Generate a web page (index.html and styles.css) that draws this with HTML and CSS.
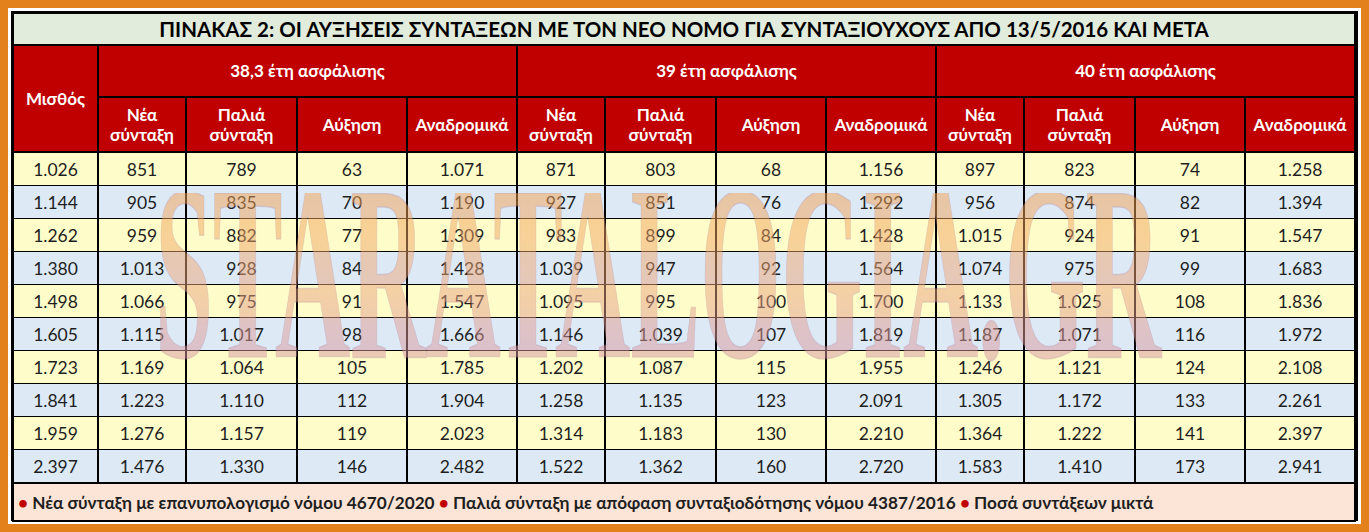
FILE: index.html
```html
<!DOCTYPE html>
<html lang="el">
<head>
<meta charset="utf-8">
<title>Πίνακας 2</title>
<link rel="stylesheet" href="styles.css">
</head>
<body>
<div class="frame">
  <div class="inner">
    <table class="grid">
      <colgroup>
        <col class="c-salary">
        <col class="c-new"><col class="c-old"><col class="c-inc"><col class="c-ret">
        <col class="c-new"><col class="c-old"><col class="c-inc"><col class="c-ret">
        <col class="c-new"><col class="c-old"><col class="c-inc"><col class="c-ret">
      </colgroup>
      <thead>
        <tr class="title-row"><th colspan="13">ΠΙΝΑΚΑΣ 2: ΟΙ ΑΥΞΗΣΕΙΣ ΣΥΝΤΑΞΕΩΝ ΜΕ ΤΟΝ ΝΕΟ ΝΟΜΟ ΓΙΑ ΣΥΝΤΑΞΙΟΥΧΟΥΣ ΑΠΟ 13/5/2016 ΚΑΙ ΜΕΤΑ</th></tr>
        <tr class="head1">
          <th rowspan="2" class="salary-head">Μισθός</th>
          <th colspan="4" class="grp">38,3 έτη ασφάλισης</th>
          <th colspan="4" class="grp">39 έτη ασφάλισης</th>
          <th colspan="4" class="grp">40 έτη ασφάλισης</th>
        </tr>
        <tr class="head2">
          <th>Νέα<br>σύνταξη</th><th>Παλιά<br>σύνταξη</th><th>Αύξηση</th><th>Αναδρομικά</th>
          <th>Νέα<br>σύνταξη</th><th>Παλιά<br>σύνταξη</th><th>Αύξηση</th><th>Αναδρομικά</th>
          <th>Νέα<br>σύνταξη</th><th>Παλιά<br>σύνταξη</th><th>Αύξηση</th><th>Αναδρομικά</th>
        </tr>
      </thead>
      <tbody>
        <tr class="y"><td>1.026</td><td>851</td><td>789</td><td>63</td><td>1.071</td><td>871</td><td>803</td><td>68</td><td>1.156</td><td>897</td><td>823</td><td>74</td><td>1.258</td></tr>
        <tr class="b"><td>1.144</td><td>905</td><td>835</td><td>70</td><td>1.190</td><td>927</td><td>851</td><td>76</td><td>1.292</td><td>956</td><td>874</td><td>82</td><td>1.394</td></tr>
        <tr class="y"><td>1.262</td><td>959</td><td>882</td><td>77</td><td>1.309</td><td>983</td><td>899</td><td>84</td><td>1.428</td><td>1.015</td><td>924</td><td>91</td><td>1.547</td></tr>
        <tr class="b"><td>1.380</td><td>1.013</td><td>928</td><td>84</td><td>1.428</td><td>1.039</td><td>947</td><td>92</td><td>1.564</td><td>1.074</td><td>975</td><td>99</td><td>1.683</td></tr>
        <tr class="y"><td>1.498</td><td>1.066</td><td>975</td><td>91</td><td>1.547</td><td>1.095</td><td>995</td><td>100</td><td>1.700</td><td>1.133</td><td>1.025</td><td>108</td><td>1.836</td></tr>
        <tr class="b"><td>1.605</td><td>1.115</td><td>1.017</td><td>98</td><td>1.666</td><td>1.146</td><td>1.039</td><td>107</td><td>1.819</td><td>1.187</td><td>1.071</td><td>116</td><td>1.972</td></tr>
        <tr class="y"><td>1.723</td><td>1.169</td><td>1.064</td><td>105</td><td>1.785</td><td>1.202</td><td>1.087</td><td>115</td><td>1.955</td><td>1.246</td><td>1.121</td><td>124</td><td>2.108</td></tr>
        <tr class="b"><td>1.841</td><td>1.223</td><td>1.110</td><td>112</td><td>1.904</td><td>1.258</td><td>1.135</td><td>123</td><td>2.091</td><td>1.305</td><td>1.172</td><td>133</td><td>2.261</td></tr>
        <tr class="y"><td>1.959</td><td>1.276</td><td>1.157</td><td>119</td><td>2.023</td><td>1.314</td><td>1.183</td><td>130</td><td>2.210</td><td>1.364</td><td>1.222</td><td>141</td><td>2.397</td></tr>
        <tr class="b"><td>2.397</td><td>1.476</td><td>1.330</td><td>146</td><td>2.482</td><td>1.522</td><td>1.362</td><td>160</td><td>2.720</td><td>1.583</td><td>1.410</td><td>173</td><td>2.941</td></tr>
      </tbody>
      <tfoot>
        <tr class="foot"><td colspan="13"><span class="dot">•</span> Νέα σύνταξη με επανυπολογισμό νόμου 4670/2020 <span class="dot">•</span> Παλιά σύνταξη με απόφαση συνταξιοδότησης νόμου 4387/2016 <span class="dot">•</span> Ποσά συντάξεων μικτά</td></tr>
      </tfoot>
    </table>
    <svg class="watermark" width="1020" height="170" viewBox="0 0 1020 170" aria-hidden="true">
      <defs>
        <linearGradient id="wm" x1="0" y1="0" x2="0" y2="1">
          <stop offset="0" stop-color="#f7a035"/>
          <stop offset="0.5" stop-color="#f0a878"/>
          <stop offset="1" stop-color="#c98cc0"/>
        </linearGradient>
      </defs>
      <text x="4" y="164" textLength="1006" lengthAdjust="spacingAndGlyphs" class="wm-text">STARATALOGIA.GR</text>
    </svg>
  </div>
</div>
</body>
</html>
```
FILE: styles.css
```css
html, body {
  margin: 0;
  padding: 0;
}
body {
  background: #e3821c;
  width: 1369px;
  height: 532px;
  overflow: hidden;
  font-family: Lato, "Open Sans", "Noto Sans", sans-serif;
}
.frame {
  margin: 8px;
  background: #ffffff;
  padding: 3px;
  height: 510px;
}
.inner {
  position: relative;
  border: 2px solid #000;
  height: 506px;
  background: #fff;
}
.grid {
  border-collapse: collapse;
  table-layout: fixed;
  width: 1342px;
  margin: -1px 0 0 -1px;
}
.c-salary { width: 85px; }
.c-new { width: 88px; }
.c-old { width: 111px; }
.c-inc { width: 110px; }
.c-ret { width: 110px; }

th, td {
  text-align: center;
  padding: 0;
  border: 2px solid #000;
}
.title-row th {
  height: 30px;
  background: #e2ecdc;
  color: #000;
  font-weight: 700;
  font-size: 20.5px;
  border-bottom: 2px solid #000;
}
.head1 th, .head2 th {
  background: #c00000;
  color: #fff;
  font-weight: 700;
  font-size: 17px;
  line-height: 20px;
}
.head1 th { height: 50px; }
.head2 th { height: 53px; }

tbody td {
  height: 32px;
  font-size: 17.5px;
  color: #1e1e1e;
  border-top: 1px solid #000;
  border-bottom: 1px solid #000;
}
tr.y td { background: #fefdca; }
tr.b td { background: #ddeaf6; }

.foot td {
  height: 36px;
  background: #fce4d6;
  text-align: left;
  padding-left: 4px;
  font-weight: 700;
  font-size: 17.2px;
  color: #1e1e1e;
  border-top: 2px solid #000;
}
.dot { color: #c00000; }

.watermark {
  position: absolute;
  left: 138px;
  top: 180px;
  pointer-events: none;
  opacity: 0.5;
}
.wm-text {
  font-family: "Liberation Serif", serif;
  font-weight: 700;
  font-size: 250px;
  fill: url(#wm);
  stroke: #a86c8c;
  stroke-width: 1.5px;
  stroke-opacity: 0.5;
}
```
